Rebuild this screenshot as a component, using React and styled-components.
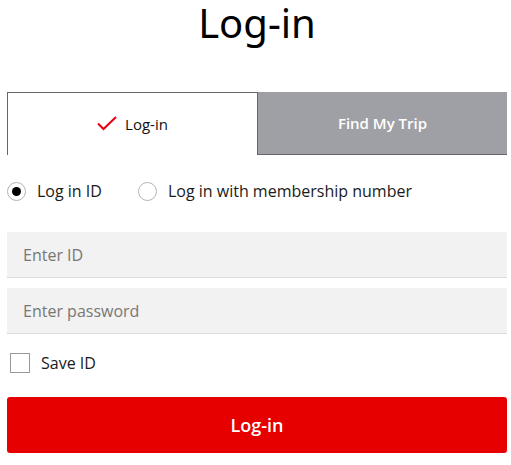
import React, { useState } from "react";
import styled, { createGlobalStyle } from "styled-components";

const GlobalStyle = createGlobalStyle`
  body {
    margin: 0;
    background: #fff;
    font-family: "Open Sans", "Noto Sans", Arial, sans-serif;
    color: #1a1a1a;
  }
`;

const Page = styled.div`
  width: 511px;
  padding: 0 4px 0 7px;
  box-sizing: border-box;
`;

const Title = styled.h1`
  margin: 0;
  height: 92px;
  padding-top: 0;
  font-family: "Noto Sans", "Open Sans", sans-serif;
  font-weight: 400;
  font-size: 40px;
  line-height: 46px;
  text-align: center;
  color: #000;
`;

const Tabs = styled.div`
  display: grid;
  grid-template-columns: 1fr 1fr;
  height: 63px;
`;

const Tab = styled.div`
  display: flex;
  align-items: center;
  justify-content: center;
  gap: 8px;
  font-size: 15px;
  box-sizing: border-box;
  ${(p) =>
    p.$active
      ? `
    background: #fff;
    color: #111;
    border: 1px solid #666;
    border-bottom: none;
    border-right: none;
    padding-bottom: 1px;
  `
      : `
    background: #9fa0a6;
    color: #fff;
    font-weight: 600;
    border-left: 1px solid #666;
    border-bottom: 1px solid #666;
  `}
`;

const RadioRow = styled.div`
  display: flex;
  align-items: center;
  margin-top: 26px;
  height: 20px;
`;

const RadioItem = styled.label`
  display: flex;
  align-items: center;
  gap: 11px;
  margin-right: 36px;
  font-size: 16px;
  color: #1a1a1a;
  cursor: pointer;
`;

const RadioCircle = styled.span`
  width: 19px;
  height: 19px;
  box-sizing: border-box;
  border: 1px solid #b5b5b5;
  border-radius: 50%;
  display: flex;
  align-items: center;
  justify-content: center;
  &::after {
    content: "";
    width: 9px;
    height: 9px;
    border-radius: 50%;
    background: ${(p) => (p.$checked ? "#000" : "transparent")};
  }
`;

const Fields = styled.div`
  display: flex;
  flex-direction: column;
  gap: 10px;
  margin-top: 31px;
`;

const Input = styled.input`
  height: 46px;
  box-sizing: border-box;
  border: none;
  border-bottom: 1px solid #dcdcdc;
  background: #f2f2f2;
  padding: 0 16px;
  font-family: "Open Sans", sans-serif;
  font-size: 16px;
  color: #222;
  outline: none;
  &::placeholder {
    color: #777;
  }
`;

const SaveRow = styled.label`
  display: flex;
  align-items: center;
  gap: 11px;
  margin-top: 18px;
  padding-left: 3px;
  font-size: 16px;
  color: #1a1a1a;
`;

const Box = styled.span`
  width: 20px;
  height: 20px;
  box-sizing: border-box;
  border: 1px solid #999;
  background: #fff;
`;

const Submit = styled.button`
  display: block;
  width: 100%;
  height: 56px;
  margin-top: 23px;
  border: none;
  border-radius: 3px;
  background: #e60000;
  color: #fff;
  font-family: "Open Sans", sans-serif;
  font-size: 18px;
  font-weight: 600;
  cursor: pointer;
`;

function Check() {
  return (
    <svg width="20" height="15" viewBox="0 0 20 15" aria-hidden="true">
      <path d="M1 7.5 L6.5 13 L19 1" fill="none" stroke="#e60012" strokeWidth="2" />
    </svg>
  );
}

export default function App() {
  const [mode, setMode] = useState("id");
  return (
    <Page>
      <GlobalStyle />
      <Title>Log-in</Title>
      <Tabs>
        <Tab $active>
          <Check />
          <span>Log-in</span>
        </Tab>
        <Tab>Find My Trip</Tab>
      </Tabs>
      <RadioRow>
        <RadioItem onClick={() => setMode("id")}>
          <RadioCircle $checked={mode === "id"} />
          Log in ID
        </RadioItem>
        <RadioItem onClick={() => setMode("member")}>
          <RadioCircle $checked={mode === "member"} />
          Log in with membership number
        </RadioItem>
      </RadioRow>
      <Fields>
        <Input placeholder="Enter ID" />
        <Input type="password" placeholder="Enter password" />
      </Fields>
      <SaveRow>
        <Box />
        Save ID
      </SaveRow>
      <Submit>Log-in</Submit>
    </Page>
  );
}
